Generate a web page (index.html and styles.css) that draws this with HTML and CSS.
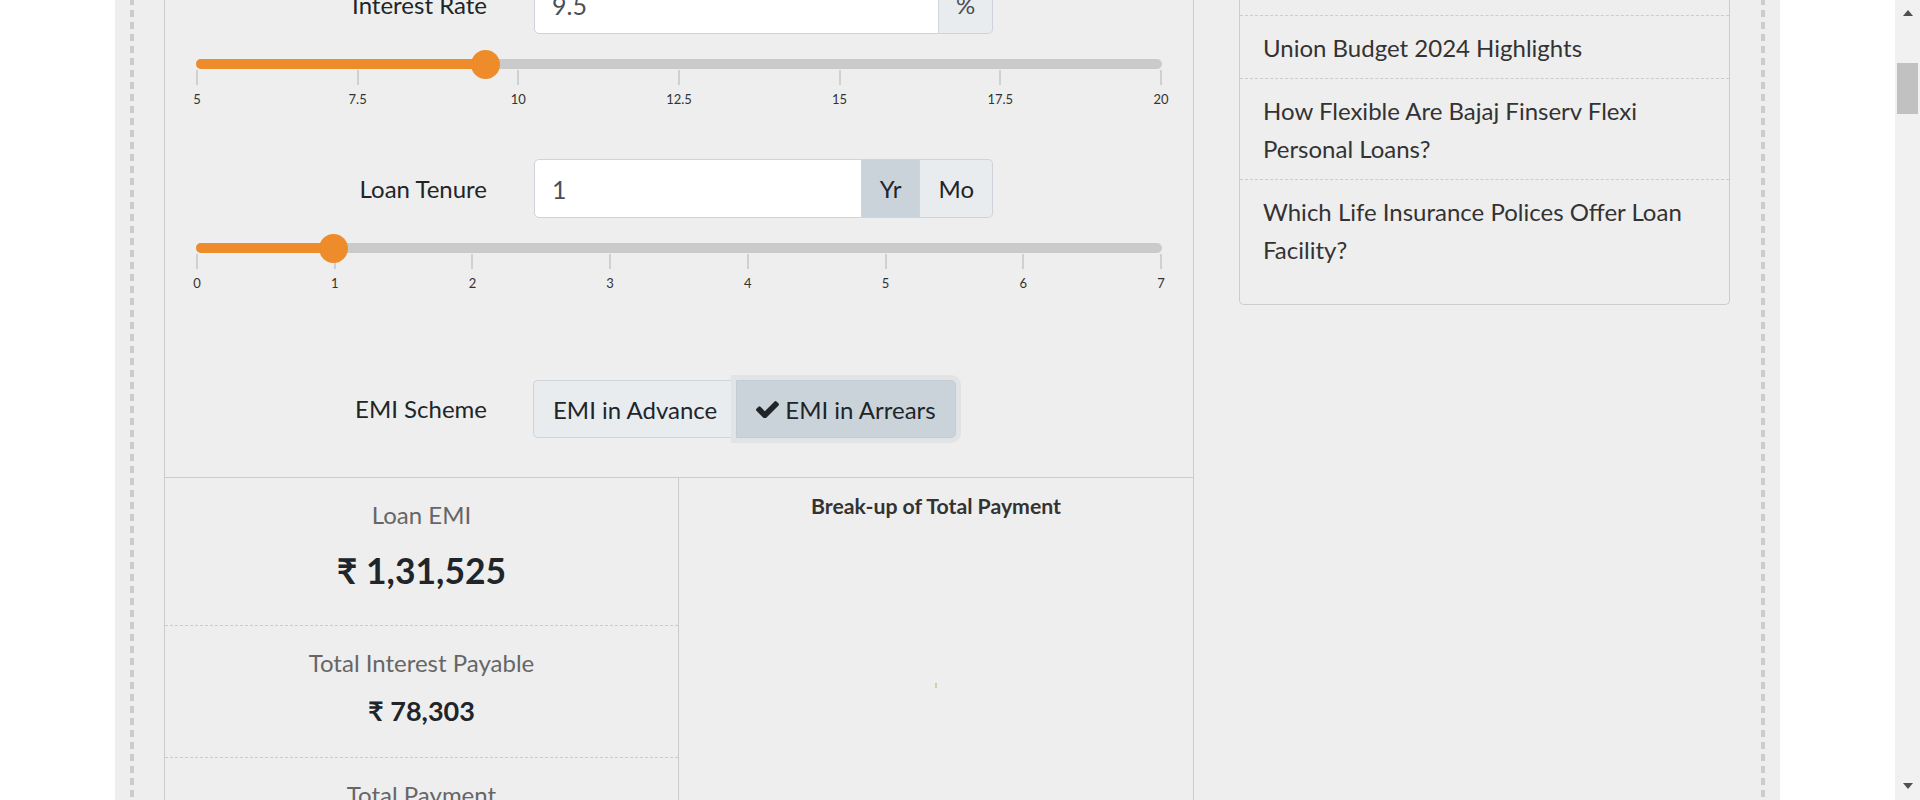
FILE: index.html
```html
<!DOCTYPE html>
<html lang="en">
<head>
<meta charset="utf-8">
<title>EMI Calculator</title>
<link rel="stylesheet" href="styles.css">
</head>
<body>
<div class="screen">
  <div class="viewport">
    <div class="wrap">
      <div class="frame">
        <section class="calc">
          <div class="calc-inputs">
            <div class="field-row first">
              <label class="field-label">Interest Rate</label>
              <div class="input-group">
                <input class="form-control" type="text" value="9.5">
                <span class="addon addon-pct">%</span>
              </div>
            </div>
            <div class="slider">
              <div class="track">
                <div class="fill" style="width:30%"></div>
                <span class="handle" style="left:30%"></span>
              </div>
              <div class="scale">
                <div class="tick"><i></i><span>5</span></div>
                <div class="tick"><i></i><span>7.5</span></div>
                <div class="tick"><i></i><span>10</span></div>
                <div class="tick"><i></i><span>12.5</span></div>
                <div class="tick"><i></i><span>15</span></div>
                <div class="tick"><i></i><span>17.5</span></div>
                <div class="tick"><i></i><span>20</span></div>
              </div>
            </div>

            <div class="field-row tenure">
              <label class="field-label">Loan Tenure</label>
              <div class="input-group">
                <input class="form-control" type="text" value="1">
                <span class="addon addon-btn active-unit">Yr</span>
                <span class="addon addon-btn">Mo</span>
              </div>
            </div>
            <div class="slider">
              <div class="track">
                <div class="fill" style="width:14.2857%"></div>
                <span class="handle" style="left:14.2857%"></span>
              </div>
              <div class="scale">
                <div class="tick"><i></i><span>0</span></div>
                <div class="tick"><i></i><span>1</span></div>
                <div class="tick"><i></i><span>2</span></div>
                <div class="tick"><i></i><span>3</span></div>
                <div class="tick"><i></i><span>4</span></div>
                <div class="tick"><i></i><span>5</span></div>
                <div class="tick"><i></i><span>6</span></div>
                <div class="tick"><i></i><span>7</span></div>
              </div>
            </div>

            <div class="field-row scheme">
              <label class="field-label">EMI Scheme</label>
              <div class="btn-group">
                <span class="btn">EMI in Advance</span>
                <span class="btn active"><svg class="check" viewBox="121 266 1550 1188" aria-hidden="true"><path d="M1671 566q0 40-28 68l-724 724-136 136q-28 28-68 28t-68-28l-136-136-362-362q-28-28-28-68t28-68l136-136q28-28 68-28t68 28l294 295 656-657q28-28 68-28t68 28l136 136q28 28 28 68z"/></svg>EMI in Arrears</span>
              </div>
            </div>
          </div>

          <div class="results">
            <div class="res-left">
              <div class="res-item">
                <div class="res-label">Loan EMI</div>
                <div class="res-value big">₹ 1,31,525</div>
              </div>
              <div class="res-item">
                <div class="res-label">Total Interest Payable</div>
                <div class="res-value">₹ 78,303</div>
              </div>
              <div class="res-item">
                <div class="res-label">Total Payment</div>
                <div class="res-value">₹ 15,78,303</div>
              </div>
            </div>
            <div class="res-right">
              <h4 class="chart-title">Break-up of Total Payment</h4>
              <div class="chart"><span class="chart-mark"></span></div>
            </div>
          </div>
        </section>

        <aside class="sidebar">
          <ul class="posts">
            <li>Union Budget 2024 Highlights</li>
            <li>How Flexible Are Bajaj Finserv Flexi Personal Loans?</li>
            <li>Which Life Insurance Polices Offer Loan Facility?</li>
          </ul>
        </aside>
      </div>
    </div>
  </div>
  <div class="scrollbar">
    <span class="sb-up"></span>
    <span class="sb-thumb"></span>
    <span class="sb-down"></span>
  </div>
</div>
</body>
</html>
```

FILE: styles.css
```css
* { box-sizing: border-box; }
html, body { margin: 0; height: 100%; }
body {
  font-family: Lato, "Noto Sans", sans-serif;
  color: #212529;
  background: #fff;
  overflow: hidden;
}
.screen { display: flex; height: 800px; }
.viewport { flex: 1; overflow: hidden; }
.wrap {
  width: 1665px;
  height: 100%;
  margin: 0 auto;
  padding: 0 19px;
  background-color: #eeeeee;
  background-image: linear-gradient(#cccccc 0 7px, transparent 7px), linear-gradient(#cccccc 0 7px, transparent 7px);
  background-size: 4px 12px;
  background-repeat: repeat-y;
  background-position: 15px -2px, right 15px top -2px;
}
.frame {
  display: flex;
  align-items: flex-start;
  height: 100%;
  padding: 0 31px 0 30px;
}

/* calculator panel */
.calc {
  width: 1030px;
  align-self: stretch;
  border-left: 1px solid #cccccc;
  border-right: 1px solid #cccccc;
}
.calc-inputs { padding: 0 31px 39px; }
.field-row { display: flex; align-items: center; height: 59px; }
.field-row.first { margin-top: -25px; }
.field-row.tenure { margin-top: 52px; }
.field-row.scheme { margin-top: 89px; height: 58px; }
.field-label {
  width: 291px;
  margin-right: 47px;
  text-align: right;
  font-size: 24px;
  line-height: 30px;
  color: #212529;
}
.input-group { display: flex; width: 459px; height: 59px; }
.form-control {
  flex: 1;
  min-width: 0;
  height: 100%;
  margin: 0;
  padding: 0 17px;
  border: 1px solid #ced4da;
  border-radius: 5px 0 0 5px;
  background: #fff;
  font-family: Lato, "Noto Sans", sans-serif;
  font-size: 25px;
  color: #495057;
  outline: none;
}
.addon {
  display: flex;
  align-items: center;
  justify-content: center;
  height: 100%;
  border: 1px solid #ced4da;
  border-left: 0;
  background: #e9ecef;
  font-size: 24px;
  color: #495057;
}
.addon:last-child { border-radius: 0 5px 5px 0; }
.addon-pct { width: 54px; }
.addon-btn { padding: 0 18px; color: #212529; }
.addon-btn.active-unit { background: #cbd3da; }

/* range slider */
.slider { margin-top: 25px; }
.track {
  position: relative;
  height: 10px;
  border-radius: 5px;
  background: #cacaca;
}
.fill { height: 100%; border-radius: 5px; background: #ee8c2c; }
.handle {
  position: absolute;
  top: 50%;
  width: 29px;
  height: 29px;
  margin: -14.5px 0 0 -14.5px;
  border-radius: 50%;
  background: #ee8c2c;
}
.scale { display: flex; justify-content: space-between; margin-top: 1px; }
.tick { width: 2px; display: flex; flex-direction: column; align-items: center; }
.tick i { display: block; width: 2px; height: 15px; background: #d0d0d0; }
.tick span {
  margin-top: 6px;
  font-size: 13px;
  line-height: 16px;
  color: #333;
  white-space: nowrap;
}

/* EMI scheme buttons */
.btn-group { display: flex; height: 58px; margin-left: -1px; }
.btn {
  display: flex;
  align-items: center;
  padding: 0 19px;
  border: 1px solid #ced4da;
  background: #e9ecef;
  font-size: 24px;
  color: #212529;
}
.btn:first-child { border-radius: 5px 0 0 5px; border-right: 0; }
.btn.active {
  border-radius: 0 5px 5px 0;
  background: #cbd3da;
  border-color: #c4ccd4;
  box-shadow: 0 0 0 5px #e2e3e4;
}
.check { width: 23px; height: 17.6px; margin-right: 6px; fill: #212529; }

/* results */
.results {
  display: grid;
  grid-template-columns: 1fr 1fr;
  border-top: 1px solid #cccccc;
}
.res-left { border-right: 1px solid #cccccc; }
.res-item {
  padding: 22px 0 28px;
  text-align: center;
  border-bottom: 1px dashed #cccccc;
}
.res-item:first-child { padding-bottom: 30px; }
.res-label { font-size: 24px; line-height: 30px; color: #666666; }
.res-value {
  margin-top: 15px;
  font-size: 27px;
  line-height: 36px;
  font-weight: 700;
  color: #212529;
}
.res-value.big { margin-top: 17px; font-size: 35.5px; line-height: 48px; }
.chart-title {
  margin: 0;
  padding-top: 15px;
  text-align: center;
  font-size: 21.25px;
  line-height: 27px;
  font-weight: 700;
  color: #333;
}
.chart { height: 330px; display: flex; align-items: center; justify-content: center; }
.chart-mark { width: 2px; height: 5px; background: #cdd3a2; }

/* sidebar */
.sidebar { width: 491px; margin-left: 45px; }
.posts {
  list-style: none;
  margin: 0;
  padding: 15px 0 0;
  border: 1px solid #cccccc;
  border-top: 0;
  border-radius: 0 0 5px 5px;
}
.posts li {
  padding: 13px 24px 11px 23px;
  border-top: 1px dashed #cccccc;
  font-size: 24px;
  line-height: 38px;
  color: #333;
}
.posts li:last-child { padding-bottom: 35px; }

/* scrollbar */
.scrollbar {
  width: 25px;
  background: #f1f1f1;
  display: flex;
  flex-direction: column;
  align-items: center;
}
.sb-up, .sb-down {
  width: 0;
  height: 0;
  border-left: 5px solid transparent;
  border-right: 5px solid transparent;
}
.sb-up { margin-top: 10px; border-bottom: 6px solid #505050; }
.sb-thumb { width: 21px; height: 51px; margin-top: 47px; background: #c1c1c1; }
.sb-down { margin-top: auto; margin-bottom: 11px; border-top: 6px solid #505050; }
```
